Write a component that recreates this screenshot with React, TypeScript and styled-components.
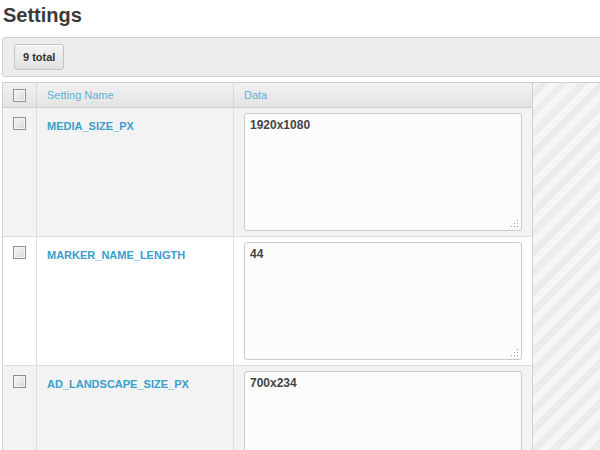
import React from "react";
import styled, { createGlobalStyle } from "styled-components";

const Global = createGlobalStyle`
  html, body { margin: 0; padding: 0; background: #fff; overflow: hidden; }
  body { font-family: "Liberation Sans", Arial, sans-serif; }
`;

const Page = styled.div`
  width: 640px;
  padding: 3px 0 0 2px;
`;

const Title = styled.h1`
  margin: 0 0 10px 1px;
  font-size: 20px;
  line-height: 24px;
  font-weight: bold;
  color: #3a3a3a;
`;

const Toolbar = styled.div`
  display: flex;
  align-items: center;
  height: 38px;
  padding: 0 11px;
  background: #ededed;
  border: 1px solid #cfcfcf;
  border-radius: 3px;
`;

const TotalButton = styled.button`
  height: 26px;
  padding: 0 8px;
  font-family: inherit;
  font-size: 11px;
  font-weight: bold;
  color: #333;
  background: linear-gradient(#f3f3f3, #e2e2e2);
  border: 1px solid #c4c4c4;
  border-radius: 3px;
  box-shadow: inset 0 1px 0 #fff;
`;

const Grid = styled.div`
  display: flex;
  margin-top: 5px;
  border-top: 1px solid #d0d0d0;
`;

const Stripes = styled.div`
  flex: 1;
  min-height: 400px;
  background: repeating-linear-gradient(
    -45deg,
    #f6f6f6 0,
    #f6f6f6 7px,
    #ececec 7px,
    #ececec 14px
  );
`;

const Table = styled.table`
  width: 531px;
  border-collapse: collapse;
  border-left: 1px solid #d0d0d0;
  border-right: 1px solid #d0d0d0;
  table-layout: fixed;
`;

const HeadCell = styled.th<{ $w?: number }>`
  width: ${(p) => (p.$w ? `${p.$w}px` : "auto")};
  height: 24px;
  padding: 0 10px;
  text-align: left;
  vertical-align: middle;
  font-size: 11px;
  font-weight: normal;
  color: #62b0d6;
  background: linear-gradient(#f1f1f1, #e3e3e3);
  border-bottom: 1px solid #d0d0d0;
  border-left: 1px solid #d8d8d8;
  &:first-child { border-left: none; padding: 0; text-align: center; }
`;

const Row = styled.tr<{ $alt: boolean }>`
  background: ${(p) => (p.$alt ? "#fff" : "#f3f3f3")};
  border-bottom: 1px solid #dedede;
`;

const CheckCell = styled.td`
  padding: 9px 0 0 0;
  text-align: center;
  vertical-align: top;
`;

const NameCell = styled.td`
  padding: 11px 10px 0 10px;
  vertical-align: top;
  font-size: 11px;
  line-height: 14px;
  font-weight: bold;
  color: #3a9dca;
  border-left: 1px solid #dedede;
`;

const DataCell = styled.td`
  padding: 5px 10px;
  vertical-align: top;
  border-left: 1px solid #dedede;
`;

const Check = styled.input.attrs({ type: "checkbox" })`
  appearance: none;
  display: block;
  margin: 0 auto;
  width: 13px;
  height: 13px;
  border: 1px solid #8f8f8f;
  background: linear-gradient(135deg, #f7f7f7, #d8d8d8);
  box-shadow: inset 0 0 0 1px #f4f4f4;
`;

const AreaWrap = styled.div`
  position: relative;
`;

const DataArea = styled.textarea`
  display: block;
  box-sizing: border-box;
  width: 100%;
  height: 118px;
  padding: 4px 5px;
  font-family: "Liberation Sans", Arial, sans-serif;
  font-size: 12px;
  line-height: 15px;
  font-weight: bold;
  color: #444;
  background: #fcfcfc;
  border: 1px solid #cacaca;
  border-radius: 3px;
  outline: none;
  resize: none;
`;

const Grip = styled.svg`
  position: absolute;
  right: 4px;
  bottom: 4px;
  width: 7px;
  height: 7px;
  pointer-events: none;
`;

const GripIcon = () => (
  <Grip viewBox="0 0 7 7">
    <g fill="#9a9a9a">
      <rect x="6" y="0" width="1" height="1" />
      <rect x="3" y="3" width="1" height="1" />
      <rect x="6" y="3" width="1" height="1" />
      <rect x="0" y="6" width="1" height="1" />
      <rect x="3" y="6" width="1" height="1" />
      <rect x="6" y="6" width="1" height="1" />
    </g>
  </Grip>
);

const settings = [
  { name: "MEDIA_SIZE_PX", value: "1920x1080" },
  { name: "MARKER_NAME_LENGTH", value: "44" },
  { name: "AD_LANDSCAPE_SIZE_PX", value: "700x234" },
];

export default function App() {
  return (
    <Page>
      <Global />
      <Title>Settings</Title>
      <Toolbar>
        <TotalButton>9 total</TotalButton>
      </Toolbar>
      <Grid>
        <Table>
          <thead>
            <tr>
              <HeadCell $w={33}>
                <Check />
              </HeadCell>
              <HeadCell $w={176}>Setting Name</HeadCell>
              <HeadCell>Data</HeadCell>
            </tr>
          </thead>
          <tbody>
            {settings.map((s, i) => (
              <Row key={s.name} $alt={i % 2 === 1}>
                <CheckCell>
                  <Check />
                </CheckCell>
                <NameCell>{s.name}</NameCell>
                <DataCell>
                  <AreaWrap>
                    <DataArea defaultValue={s.value} />
                    <GripIcon />
                  </AreaWrap>
                </DataCell>
              </Row>
            ))}
          </tbody>
        </Table>
        <Stripes />
      </Grid>
    </Page>
  );
}
